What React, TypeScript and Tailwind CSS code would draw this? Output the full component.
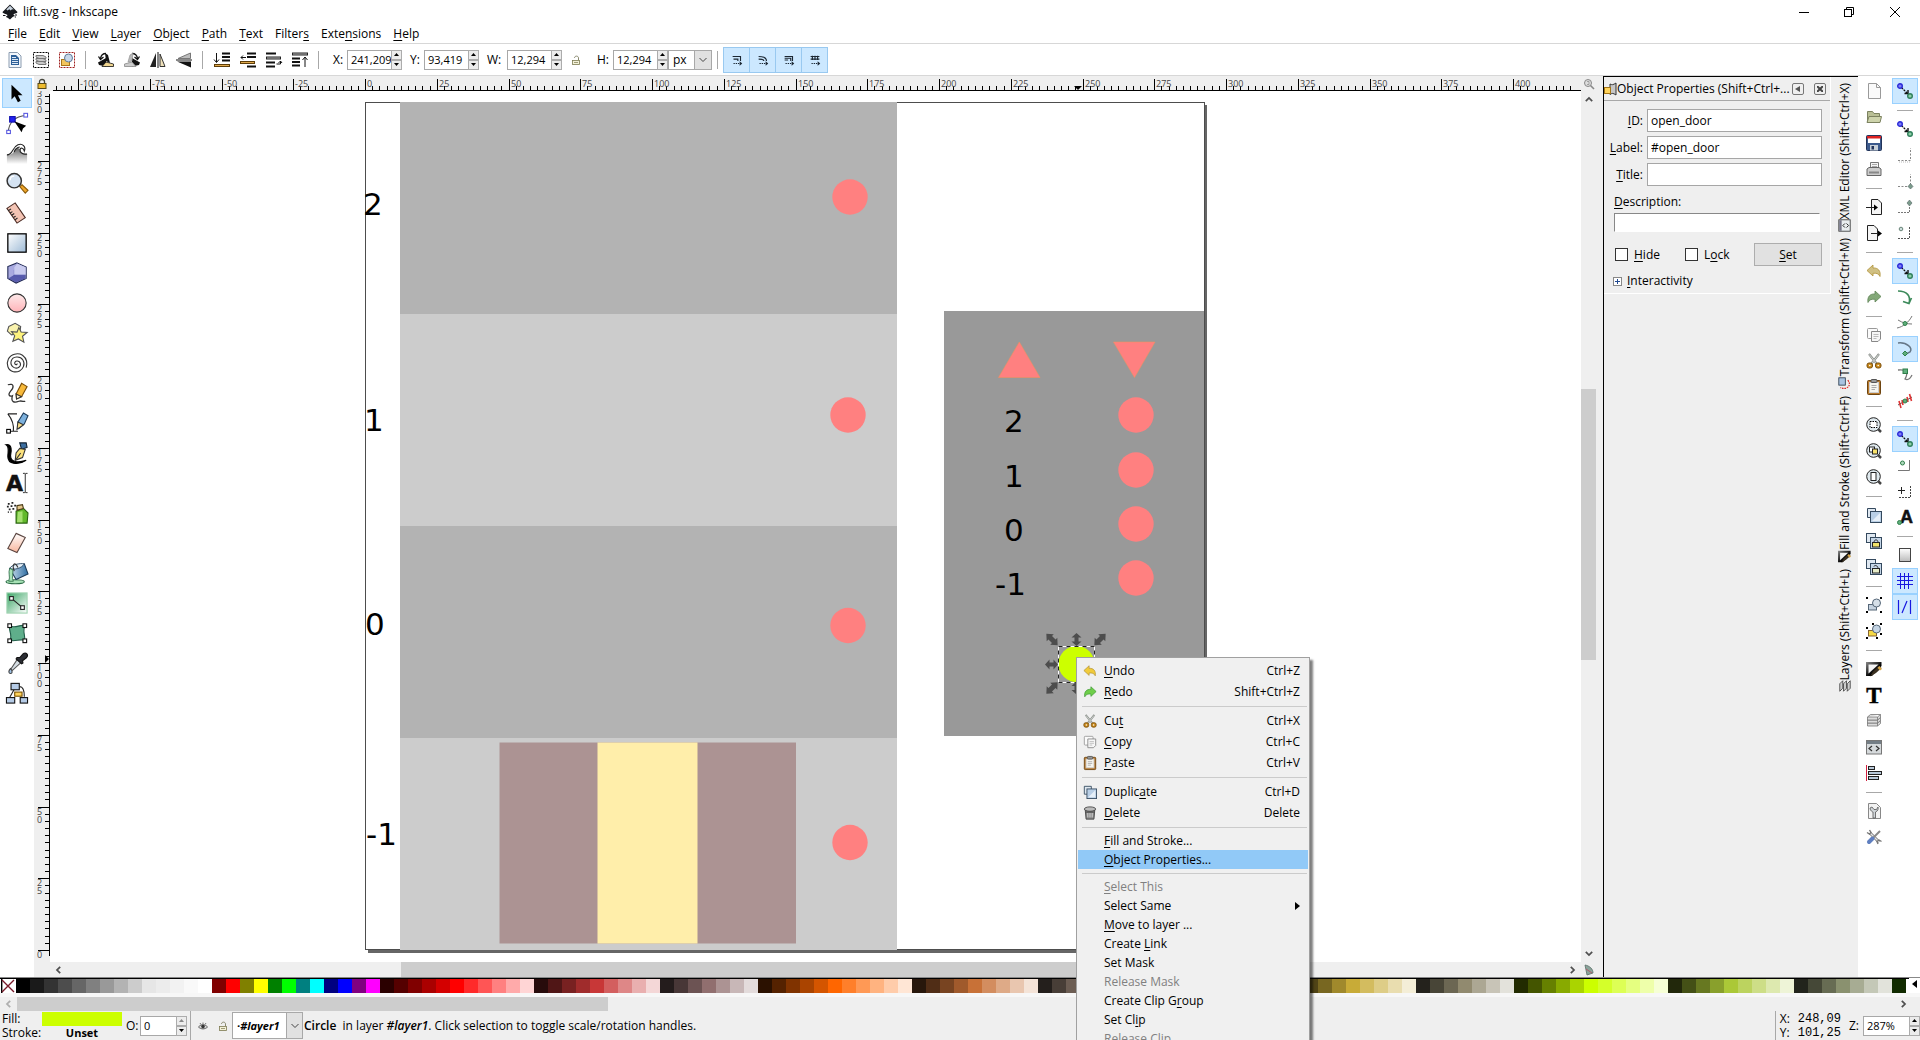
import React from "react";

type Kids = { children?: React.ReactNode };

/* ---------- helpers ---------- */

/** Renders a label in which the letter after "~" is the underlined mnemonic. */
function Mn({ t }: { t: string }) {
  const i = t.indexOf("~");
  if (i < 0) return <>{t}</>;
  return (
    <>
      {t.slice(0, i)}
      <span className="underline underline-offset-2">{t[i + 1]}</span>
      {t.slice(i + 2)}
    </>
  );
}

function I16({ children }: Kids) {
  return (
    <svg className="overflow-visible" width="16" height="16" viewBox="0 0 16 16" fill="none" stroke="#222" strokeWidth="1" aria-hidden="true">
      {children}
    </svg>
  );
}

function I24({ children }: Kids) {
  return (
    <svg className="overflow-visible" width="22" height="22" viewBox="0 0 24 24" fill="none" stroke="#222" strokeWidth="1.2" aria-hidden="true">
      {children}
    </svg>
  );
}

/* ---------- shared icons ---------- */

const undoPath = "M1 7.5 L7 2 V5 C12 4.500 15 8 14 13.500 C12.500 10.500 10.500 10 7 10.300 V13 Z";
const redoPath = "M15 7.5 L9 2 V5 C4 4.500 1 8 2 13.500 C3.500 10.500 5.500 10 9 10.300 V13 Z";

const UndoIcon = ({ fill }: { fill: string }) => (
  <I16><path d={undoPath} fill={fill} stroke="#b09238" strokeWidth=".8" /></I16>
);
const RedoIcon = ({ fill, line }: { fill: string; line: string }) => (
  <I16><path d={redoPath} fill={fill} stroke={line} strokeWidth=".8" /></I16>
);
const CutIcon = () => (
  <I16>
    <path d="M3 1 L10.500 10.500 M13 1 L5.500 10.500" stroke="#8a8f8a" strokeWidth="2.200" />
    <path d="M3.300 1.500 L10 10 M12.700 1.500 L6 10" stroke="#e4e6e4" strokeWidth=".8" />
    <rect x="1" y="10" width="5.500" height="5" rx="2" fill="#c98a1b" stroke="#7c4f0c" />
    <rect x="9.500" y="10" width="5.500" height="5" rx="2" fill="#c98a1b" stroke="#7c4f0c" />
    <circle cx="3.800" cy="12.500" r=".8" fill="#fff" stroke="none" />
    <circle cx="12.200" cy="12.500" r=".8" fill="#fff" stroke="none" />
  </I16>
);
const CopyIcon = () => (
  <I16>
    <rect x="1.500" y="1.500" width="10" height="10" rx="1" fill="#fbfbfb" stroke="#999" />
    <path d="M5.500 4.500 H14.500 V12 L12 14.500 H5.500 Z" fill="#f6f6f6" stroke="#888" />
    <path d="M7.500 7.500 H12.500 M7.500 9.500 H12.500 M7.500 11.500 H10.500" stroke="#bbb" />
  </I16>
);
const PasteIcon = () => (
  <I16>
    <rect x="1.500" y="1.500" width="13" height="14" rx="1" fill="#b7792c" stroke="#6d4410" />
    <rect x="3.500" y="3.500" width="9" height="10" fill="#f6f5ee" stroke="#ccc" />
    <rect x="5" y=".5" width="6" height="3" rx="1" fill="#999" stroke="#555" />
    <path d="M5.500 6.500 H10.500 M5.500 8.500 H10.500 M5.500 10.500 H9" stroke="#aaa" />
  </I16>
);
const DupIcon = () => (
  <I16>
    <path d="M1.500 1.500 H9.500 V10.500 H1.500 Z" fill="#dfe8f1" stroke="#34495e" />
    <rect x="4.500" y="4.500" width="11" height="11" fill="#b9cfe6" stroke="#34495e" />
    <path d="M6 14 L14 6 V14 Z" fill="#e6eff8" stroke="none" />
  </I16>
);
const TrashIcon = () => (
  <I16>
    <path d="M2.500 4 L3.500 15 H12.500 L13.500 4 Z" fill="#888" stroke="#444" />
    <ellipse cx="8" cy="3.500" rx="6.500" ry="2.500" fill="#bbb" stroke="#444" />
    <path d="M5.500 8 V13 M8 8 V13 M10.500 8 V13" stroke="#ddd" />
    <path d="M3 7 H13" stroke="#444" />
  </I16>
);
const Nodes = () => (
  <I16>
    <path d="M4.500 4.500 L11 11" stroke="#111" strokeWidth="1.400" strokeDasharray="2 1" />
    <path d="M7.500 10.500 H11 V7" fill="none" stroke="#111" strokeWidth="1.400" />
    <circle cx="3" cy="3" r="2.300" fill="#7f7ff5" stroke="#2a2ad8" strokeWidth="1.400" />
    <circle cx="13" cy="13" r="2.300" fill="#8fd0a8" stroke="#2f7f5a" strokeWidth="1.400" />
  </I16>
);
const DockFill = () => (
  <I16>
    <defs>
      <linearGradient id="fs" x2="1" y2="1"><stop stopColor="#8a8a8a" /><stop offset=".6" stopColor="#000" /></linearGradient>
    </defs>
    <path d="M0 1 H15.500 V5 L6 15 H0 Z" fill="url(#fs)" stroke="none" />
    <path d="M2.500 3.500 H12.500 L2.500 12.500 Z" fill="#f4f4f4" stroke="none" />
    <path d="M15.500 7 L10 12 L4 15.500 L7 10.500 L13 5 Z" fill="#3b3020" stroke="none" />
    <path d="M13.500 5 L16 8 L14 9.500 L11.500 6.800 Z" fill="#d7a648" stroke="none" />
  </I16>
);
const StackIcon = () => (
  <I16>
    {[10, 7, 4].map((y) => (
      <path key={y} d={`M1.500 ${y} L4.500 ${y - 2.5} H14.500 V${y + 0.5} L11.500 ${y + 3} H1.500 Z M1.500 ${y} H11.500 L14.500 ${y - 2.5} M11.500 ${y} V${y + 3}`} fill="#dcdcdc" stroke="#777" strokeWidth=".8" />
    ))}
  </I16>
);
const XmlIcon = () => (
  <I16>
    <rect x=".5" y="1.500" width="15" height="13.500" fill="#d5d9db" stroke="#777" />
    <rect x="1" y="2" width="14" height="3" fill="#737d85" stroke="none" />
    <path d="M6 7 L3 9.500 L6 12 M10 7 L13 9.500 L10 12" stroke="#333" strokeWidth="1.200" />
  </I16>
);
const LockIcon = () => (
  <svg width="12" height="12" viewBox="0 0 12 12" fill="none" aria-hidden="true">
    <path d="M3.500 6 V3.500 C3.500 .8 8.500 .8 8.500 3.500 V6" stroke="#44443a" strokeWidth="1.300" />
    <rect x="2" y="5.500" width="8" height="5" fill="#eebb2e" stroke="#5a4b18" />
  </svg>
);
const OpenLockIcon = () => (
  <svg width="12" height="12" viewBox="0 0 12 12" fill="none" aria-hidden="true">
    <path d="M4.500 4 C4.500 1.500 8.500 1.500 8.500 4 V6" stroke="#8a8a70" />
    <rect x="2.500" y="6.500" width="7" height="4" fill="#f3f1d8" stroke="#7d7a52" strokeWidth=".8" />
    <path d="M4 8.500 H8" stroke="#8a8660" strokeWidth=".8" />
  </svg>
);
const Chev = ({ d }: { d: string }) => (
  <svg width="8" height="8" viewBox="0 0 10 10" fill="none" stroke="#505050" strokeWidth="2.200" aria-hidden="true">
    <path d={d} />
  </svg>
);
const chevLeft = "M6.500 1 L2.500 5 L6.500 9";
const chevRight = "M3.500 1 L7.500 5 L3.500 9";
const chevUp = "M1 6.500 L5 2.500 L9 6.500";
const chevDown = "M1 3.500 L5 7.500 L9 3.500";

/* ---------- title and menu bars ---------- */

function TitleBar() {
  return (
    <header className="flex h-6 shrink-0 items-center bg-white pl-0.5">
      <svg width="16" height="16" viewBox="0 0 16 16" aria-hidden="true">
        <path d="M8 .5 L15.500 8 C15.500 9.500 11 9.500 11.500 10.500 C12 11.500 13 11 12.500 12.300 C11 12.500 10.500 13 8 15.500 C6.500 14.500 5.500 13.500 4 13 C3.500 12 6 12 5.500 11 C4.500 10 .5 9.500 .5 8 Z" fill="#16181c" />
        <path d="M8 1.800 L11.800 5.600 L10 5.200 L8.700 6.600 L7.300 5.200 L5.600 6.500 L4.300 5.500 Z" fill="#c9d4e0" />
        <path d="M1 11.500 H3.500 M13 11 H15 M12.800 13 H14" stroke="#16181c" />
      </svg>
      <h1 className="ml-[5px] flex-1 text-xs leading-4">lift.svg - Inkscape</h1>
      <div className="flex items-center pr-[19px]">
        <button aria-label="Minimize" className="mr-[33px]">
          <svg width="12" height="12" viewBox="0 0 12 12" stroke="#000"><path d="M1 6.500 H11" /></svg>
        </button>
        <button aria-label="Restore" className="mr-[34px]">
          <svg width="12" height="12" viewBox="0 0 12 12" stroke="#000" fill="none">
            <rect x="1.500" y="3.500" width="7" height="7" /><path d="M3.500 3.500 V1.500 H10.500 V8.500 H8.500" />
          </svg>
        </button>
        <button aria-label="Close">
          <svg width="12" height="12" viewBox="0 0 12 12" stroke="#000"><path d="M1 1 L11 11 M11 1 L1 11" /></svg>
        </button>
      </div>
    </header>
  );
}

const menus = ["~File", "~Edit", "~View", "~Layer", "~Object", "~Path", "~Text", "Filter~s", "Exte~nsions", "~Help"];

function MenuBar() {
  return (
    <nav className="flex h-5 shrink-0 items-center gap-3 border-b border-[#d7d7d7] bg-white pl-2">
      {menus.map((m) => (
        <button key={m} className="text-xs leading-4"><Mn t={m} /></button>
      ))}
    </nav>
  );
}

/* ---------- tool controls bar ---------- */

function Spin({ label, value, width, dim }: { label: string; value: string; width: string; dim?: boolean }) {
  return (
    <span className="flex">
      <input aria-label={label} defaultValue={value} className={`h-5 border border-r-0 border-[#a8a8a8] bg-white pl-[3px] text-[11px] leading-4 outline-none ${width}`} />
      <span className="flex h-5 w-[11px] flex-col">
        <button aria-label={`${label} up`} className="flex h-2.5 items-center justify-center border border-[#acacac] bg-[#ececec]">
          <svg width="5" height="3" viewBox="0 0 5 3" fill={dim ? "#888" : "#000"}><path d="M0 3 L2.500 0 L5 3 Z" /></svg>
        </button>
        <button aria-label={`${label} down`} className="flex h-2.5 items-center justify-center border border-[#acacac] bg-[#ececec]">
          <svg width="5" height="3" viewBox="0 0 5 3" fill="#000"><path d="M0 0 L2.500 3 L5 0 Z" /></svg>
        </button>
      </span>
    </span>
  );
}

const VSep = () => <span className="h-[18px] w-px shrink-0 bg-[#a8a8a8]" />;

const TB = ({ label, children }: { label: string } & Kids) => (
  <button aria-label={label} className="flex h-6 w-[26px] items-center justify-center">{children}</button>
);

function ControlsBar() {
  return (
    <div className="flex h-8 shrink-0 items-center border-b border-[#d7d7d7] bg-white pl-0.5">
      <TB label="Select all">
        <I16>
          <path d="M2 .5 H10.500 L14 4 V15.500 H2 Z" fill="#f3f7fc" stroke="#8b9cb0" />
          <path d="M4 3 H9 L12 6 V13 H4 Z" fill="#2e6098" stroke="none" />
          <path d="M5 5.500 H9 M5 7.500 H11 M5 9.500 H11 M5 11.500 H11" stroke="#dce8f5" />
        </I16>
      </TB>
      <TB label="Select all in all layers">
        <I16>
          <rect x=".5" y=".5" width="15" height="15" stroke="#000" strokeDasharray="2 1" />
          {[9.5, 6.5, 3.5].map((y) => (
            <path key={y} d={`M3 ${y} H10 L13 ${y + 1.5} V${y + 3} H6 L3 ${y + 1.5} Z`} fill="#c9c9c9" stroke="#777" />
          ))}
        </I16>
      </TB>
      <TB label="Deselect">
        <I16>
          <rect x=".5" y=".5" width="15" height="15" stroke="#a02020" strokeDasharray="2 1" />
          <rect x="2.500" y="7.500" width="8" height="6" fill="#f3c55c" stroke="#a8761a" />
          <circle cx="9.500" cy="6" r="4" fill="#c8d8ea" stroke="#5f7a99" />
        </I16>
      </TB>
      <span className="ml-[5px] mr-[7px] flex"><VSep /></span>
      <TB label="Rotate 90 counter-clockwise">
        <I16>
          <path d="M0 10.500 L8 6 V14.500 L1 13 Z" fill="#111" stroke="none" />
          <path d="M8 10 L15.500 12 V14.500 H4 Z" fill="#f0d58f" stroke="#111" strokeWidth=".8" />
          <path d="M2.500 6.500 C3 3 5 1.500 8 1.500 M.5 4.500 L2.500 7.500 L5.500 5" stroke="#111" strokeWidth="1.300" />
          <path d="M7 1 L10 3 L12 11 L8 9 Z" fill="#111" stroke="none" />
        </I16>
      </TB>
      <TB label="Rotate 90 clockwise">
        <I16>
          <path d="M16 10.500 L8 6 V14.500 L15 13 Z" fill="#111" stroke="none" />
          <path d="M8 10 L.5 12 V14.500 H12 Z" fill="#ccc" stroke="#888" strokeWidth=".8" />
          <path d="M13.500 6.500 C13 3 11 1.500 8 1.500 M15.500 4.500 L13.500 7.500 L10.500 5" stroke="#111" strokeWidth="1.300" />
          <path d="M9 1 L6 3 L4 10 L8 9 Z" fill="#bbb" stroke="#888" strokeWidth=".6" />
        </I16>
      </TB>
      <TB label="Flip horizontal">
        <I16>
          <path d="M6 1 V15 H0 Z" fill="#222" stroke="none" />
          <path d="M8 0 V16" stroke="#111" />
          <path d="M10 2 V14.500 H15 Z" fill="#efe1ba" stroke="#333" />
        </I16>
      </TB>
      <TB label="Flip vertical">
        <I16>
          <path d="M14.500 1 V6.500 H2 Z" fill="#bcbcbc" stroke="#777" />
          <path d="M0 8 H16" stroke="#111" />
          <path d="M15 9.500 V15.500 L1 9.500 Z" fill="#111" stroke="none" />
        </I16>
      </TB>
      <span className="ml-[5px] mr-[6px] flex"><VSep /></span>
      <TB label="Lower to bottom">
        <I16>
          <path d="M2.500 1 V10 M0 7.500 L2.500 10.500 L5 7.500" stroke="#111" />
          <path d="M8 1.500 H16 M8 5 H16 M8 8.500 H16" stroke="#111" strokeWidth="2" />
          <rect x=".5" y="12.500" width="15" height="2" fill="#e0a94d" stroke="#5d3d08" />
        </I16>
      </TB>
      <TB label="Lower">
        <I16>
          <path d="M7 1.500 H16 M7 5 H16 M7 14.500 H16" stroke="#111" strokeWidth="2" />
          <path d="M6 5.500 H1 M3 3.500 L1 5.500 L3 7.500" stroke="#111" />
          <rect x=".5" y="9.500" width="14" height="2" fill="#e0a94d" stroke="#5d3d08" />
        </I16>
      </TB>
      <TB label="Raise">
        <I16>
          <path d="M0 1.500 H10 M0 10.500 H9 M0 14.500 H9" stroke="#111" strokeWidth="2" />
          <rect x=".5" y="5" width="14" height="2" fill="#bbb" stroke="#222" />
          <path d="M10.500 12 H14.500 V9 M12.500 11 L14.500 9 L16 11" stroke="#111" />
        </I16>
      </TB>
      <TB label="Raise to top">
        <I16>
          <rect x=".5" y="1" width="15" height="2" fill="#bbb" stroke="#222" />
          <path d="M0 6.500 H8 M0 10 H8 M0 13.500 H8" stroke="#111" strokeWidth="2" />
          <path d="M13 15 V5 M10.500 8 L13 5 L15.500 8" stroke="#111" />
        </I16>
      </TB>
      <span className="ml-[5px] mr-[14px] flex"><VSep /></span>
      <span className="w-[14px] text-xs">X:</span>
      <Spin label="X" value="241,209" width="w-11" />
      <span className="ml-2 w-[14px] text-xs">Y:</span>
      <Spin label="Y" value="93,419" width="w-11" />
      <span className="ml-2 w-5 text-xs">W:</span>
      <Spin label="Width" value="12,294" width="w-11" />
      <button aria-label="Lock width and height" className="ml-2 mr-[15px]"><OpenLockIcon /></button>
      <span className="w-4 text-xs">H:</span>
      <Spin label="Height" value="12,294" width="w-11" />
      <span className="relative flex">
        <select aria-label="Unit" className="h-5 w-11 appearance-none border border-[#a8a8a8] bg-white pl-1 text-xs leading-4 outline-none">
          <option>px</option>
        </select>
        <span className="pointer-events-none absolute right-0 top-0 flex h-5 w-[18px] items-center justify-center border border-[#a8a8a8] bg-[#e1e1e1]">
          <svg width="8" height="6" viewBox="0 0 8 6" fill="none" stroke="#444"><path d="M.5 1 L4 4.500 L7.500 1" /></svg>
        </span>
      </span>
      <span className="mx-[5px] flex"><VSep /></span>
      <div className="flex border-l border-[#99c9f0]">
        {[
          "M3 4 H12 V9 M4 7 H9 V9",
          "M3 4 C8 4 12 5 12 9 M3 7 C6 7 9 7 9 9",
          "M3 4 H12 V9 M3 6 H10 V9 M3 8 H7",
          "M3 4 H13 M3 7 H13 M5 3 V8 M8 3 V8 M11 3 V8",
        ].map((d, i) => (
          <button key={d} aria-label={`Transform option ${i + 1}`} className="flex h-[26px] w-[26px] items-center justify-center border-y border-r border-[#99c9f0] bg-[#cce8ff]">
            <svg width="14" height="14" viewBox="0 0 16 16" fill="none" stroke="#1b2733" strokeWidth="1.300">
              <path d={d} /><path d="M4 12 H12" strokeDasharray="1.500 1" /><path d="M11 9.500 L14 12 L11 14.500 Z" fill="#1b2733" stroke="none" />
            </svg>
          </button>
        ))}
      </div>
    </div>
  );
}

/* ---------- toolbox ---------- */

const tools: { name: string; icon: React.ReactNode }[] = [
  { name: "Select", icon: <path d="M6 3 V19 L9.500 15.500 L13 22 L16 20.500 L13 14.500 H18 Z" fill="#000" stroke="none" /> },
  { name: "Node", icon: (<><path d="M2.500 22 C3 12 8 5 22 3.500" stroke="#555" /><rect x=".8" y="20" width="4" height="3.500" fill="#fff" stroke="#5a5ae0" /><rect x="19.500" y="1.500" width="4" height="4" fill="#fff" stroke="#5a5ae0" /><rect x="4" y="5" width="6" height="6" fill="#2222f0" stroke="#1010b0" /><path d="M9 10 L22 15 L18.500 18 L17 22 Z" fill="#000" stroke="none" /></>) },
  { name: "Tweak", icon: (<><defs><linearGradient id="tw" x2="0" y2="1"><stop stopColor="#666" /><stop offset="1" stopColor="#fff" /></linearGradient></defs><path d="M1 14 C8 14 6 6 13 3 C18 1 22 5 20 10 C19 6 16 6 15.500 8 C14.500 11 18 14 23 13 V24 H1 Z" fill="#fff" stroke="none" /><path d="M1 14 C7 14 8 12 9 9 C11 6 13 6 15.500 8 C14.500 11 18 14 23 13 V24 H1 Z" fill="url(#tw)" stroke="none" /><path d="M1 14 C8 14 6 6 13 3 C18 1 22 5 20 10 C19 6 16 6 15.500 8 C14.500 11 18 14 23 13 M9 11 C10 8 12 6 15 5.500" /></>) },
  { name: "Zoom", icon: (<><path d="M15 16 L17.500 14 L24 20 L21 23 Z" fill="#f0a62a" stroke="#8a5a08" /><circle cx="9" cy="9.500" r="7.800" fill="#d5e3f2" stroke="#333" strokeWidth="1.600" /><path d="M4.500 9 C4.500 6 6.500 4.500 9 4.500" stroke="#fff" strokeWidth="1.500" /></>) },
  { name: "Measure", icon: (<><path d="M1 7 L10 1 L21 17 L12 23 Z" fill="#f3c4b4" stroke="#4a2a22" /><path d="M2.500 9.500 L5.500 7.500 M4.500 12 L7 10.500 M6.200 14.500 L9 12.500 M8 17 L10.500 15.500 M9.800 19.500 L12.500 17.500" stroke="#222" /></>) },
  { name: "Rectangle", icon: (<><defs><linearGradient id="rc" x2="1" y2="1"><stop stopColor="#fff" /><stop offset="1" stopColor="#9dbad6" /></linearGradient></defs><rect x="2" y="2" width="20" height="20" fill="url(#rc)" stroke="#000" strokeWidth="1.400" /></>) },
  { name: "3D box", icon: (<><path d="M12 1 L22 5.500 V18 L11 23 L2 18 V5 Z" fill="#a9aae0" stroke="#222a55" /><path d="M12 1 L9 9 V15 L2 18 M9 9 V15 L22 18" fill="none" stroke="#7f82c4" strokeWidth=".6" /><path d="M12 1.500 L21.500 5.800 V14 H9 V6 Z" fill="#c9cbef" stroke="none" /><path d="M9 14 H21 V18 L11 22 L3 18 Z" fill="#4347a0" stroke="none" opacity=".8" /></>) },
  { name: "Ellipse", icon: (<><defs><linearGradient id="el" x2="0" y2="1"><stop stopColor="#fdeaea" /><stop offset="1" stopColor="#ffb3b8" /></linearGradient></defs><circle cx="12" cy="12" r="10" fill="url(#el)" stroke="#333" /></>) },
  { name: "Star", icon: (<><path d="M3 5 L10 1.500 L16 5 L15 12 L6 14 L1.500 10 Z" fill="#faf3ae" stroke="#555" /><path d="M14 6 L16.500 11 L23 11.500 L18 15.500 L19.500 22 L13.500 18.500 L7.500 21 L9.500 15 L6 10.500 L12 11 Z" fill="#fdf27c" stroke="#555" /></>) },
  { name: "Spiral", icon: <path d="M12 12.500 C12.500 14 10 14.500 9.500 12.500 C9 9.500 14 8.500 15.500 12 C17 16.500 11.500 19 8 16.500 C3.500 13.500 5 6 11.500 5.500 C18 5 21 11 19 16 C17.500 20 13 22.500 8 21.500 C2 20 0 13 2.500 8 C5 2 13 .5 18 3.500 C23 7 23.500 13 22 17" stroke="#333" /> },
  { name: "Pencil", icon: (<><path d="M2 3 C9 1 9 6 5 10 C1 15 5 16 7 15 C5 22 9 23 14 21 C18 20 19 22 21 21" stroke="#333" strokeWidth="1.400" /><path d="M11 13 L17 1.500 L23 5 L17 16 L11.500 18.500 Z" fill="#f7b93a" stroke="#7a4d08" /><path d="M11 13 L17 16 L11.500 18.500 Z" fill="#fff3d0" stroke="#333" /></>) },
  { name: "Pen", icon: (<><path d="M2 2 H12 M2 2 C6 7 9 13 8 21 H4 M8 21 H13" stroke="#222" /><rect x=".8" y="19" width="4" height="4" fill="#fff" stroke="#000" /><path d="M13 11 L19 1 L24 4 L20 13 L14 18 Z" fill="#7db1dd" stroke="#1d3c5a" /><path d="M13 11 L19 14 L12 19 Z" fill="#f8df8d" stroke="#333" /></>) },
  { name: "Calligraphy", icon: (<><path d="M0 3 C7 2 6 10 5 15 C5 22 13 23 22 20 C13 26 2 24 2 16 C2 11 4 5 0 3 Z" fill="#000" stroke="#000" /><path d="M15 1 H22 L23 6 L17 8 Z" fill="#3c6ea0" stroke="#123" /><path d="M15 7 L21 8 L18 17 L10 20 L11 12 Z" fill="#fbe17c" stroke="#333" /><path d="M11 19 L16 12" stroke="#333" /></>) },
  { name: "Text", icon: (<><text x="0" y="21" fontFamily="DejaVu Sans" fontWeight="bold" fontSize="24" fill="#111" stroke="#111" strokeWidth=".6">A</text><path d="M18.500 1.500 H20.500 L21 2 L21.500 1.500 H23.500 M21 2 V22 M18.500 22.500 H20.500 L21 22 L21.500 22.500 H23.500" stroke="#222" strokeWidth="1" /></>) },
  { name: "Spray", icon: (<><path d="M11 10 L19 7 L24 12 L23 23 H11 Z" fill="#62b92c" stroke="#2a6310" /><path d="M13 11 L18 10 V22 H12 Z" fill="#a5e070" stroke="none" /><path d="M12 4 L18 3 L19 7 L12 9 Z" fill="#e3c68b" stroke="#4d3d18" /><path d="M2 2 H4 M6 1 H8 M1 5 H3 M5 4.500 H7 M9 4 H11 M3 8 H5 M7 7.500 H9 M5 11 H6 M2 11 H3" stroke="#222" strokeWidth="1.800" /></>) },
  { name: "Eraser", icon: (<><defs><linearGradient id="er" x2="0" y2="1"><stop stopColor="#fff" /><stop offset="1" stopColor="#f8b59c" /></linearGradient></defs><path d="M11 1.500 L21 6 L12 22.500 L2 18 Z" fill="url(#er)" stroke="#5a4540" /></>) },
  { name: "Paint bucket", icon: (<><defs><linearGradient id="bk" x2="1"><stop stopColor="#cfe0ee" /><stop offset="1" stopColor="#2f6ea3" /></linearGradient></defs><ellipse cx="10" cy="21.500" rx="10" ry="2.200" fill="#a7e2b5" stroke="#2c6b46" /><path d="M4 7 L20 2 L24 13 L11 19 Z" fill="url(#bk)" stroke="#1c3a58" /><path d="M4 7 C9 9 17 7 20 2 C15 1 6 3 4 7 Z" fill="#e4eff8" stroke="#1c3a58" strokeWidth=".9" /><path d="M4 7 C2 12 5 16 3 21 H8 C6 17 8 13 7.500 8.500 Z" fill="#a7e2b5" stroke="#2c6b46" strokeWidth=".9" /><path d="M9 10 C6 2 10 -1 13 6" stroke="#333" /></>) },
  { name: "Gradient", icon: (<><defs><linearGradient id="gr" x2="1" y2="1"><stop stopColor="#3aa565" /><stop offset="1" stopColor="#fff" /></linearGradient></defs><rect x="1" y="1" width="22" height="22" fill="url(#gr)" stroke="#9fd3b1" /><path d="M6 7 L18 17" stroke="#222" /><rect x="4" y="5" width="4" height="4" fill="#fff" stroke="#222" /><rect x="16" y="15" width="4" height="4" fill="#fff" stroke="#222" /></>) },
  { name: "Mesh", icon: (<><path d="M4 4 C10 8 15 2 21 4 C17 10 22 15 20 20 C15 18 10 22 4 20 C8 14 2 9 4 4 Z" fill="#5fae8b" stroke="#225f4a" />{[[2, 2], [18.5, 2], [2, 18.5], [18.5, 18.5]].map(([x, y]) => (<rect key={`${x}-${y}`} x={x} y={y} width="4" height="4" fill="#fff" stroke="#111" />))}</>) },
  { name: "Dropper", icon: (<><path d="M13 7 L17 11 L7 20 L5 19 Z" fill="#d5dde3" stroke="#555" /><path d="M12 6 L15 6 L19 1.500 C22 0 25 3 22.500 6 L18 9.500 L18.500 12 L17 13 L11 7.500 Z" fill="#2b2d33" stroke="#111" /><path d="M5 18 C2 21 3 23.500 5 23.500 C7 23.500 7.500 21 5 18 Z" fill="#9ec1e4" stroke="#444" /></>) },
  { name: "Connector", icon: (<><path d="M9 8 L4 17 M15 5 C19 5 20 12 20 16" stroke="#222" /><rect x="5.500" y="1.500" width="9" height="7" fill="#b5cbe6" stroke="#111" /><rect x=".5" y="17" width="9" height="6" fill="#b5cbe6" stroke="#111" /><rect x="15.500" y="17" width="8" height="6" fill="#b5cbe6" stroke="#111" /><rect x="9.500" y="11" width="8" height="4.500" fill="#ffd35a" stroke="#7a5200" /></>) },
];

function Toolbox() {
  return (
    <aside className="flex w-[34px] shrink-0 flex-col items-center bg-white pt-0.5">
      {tools.map((t, i) => (
        <button
          key={t.name}
          aria-label={t.name}
          className={i === 0 ? "flex h-[30px] w-[30px] items-center justify-center border border-[#99d1ff] bg-[#cce8ff]" : "flex h-[30px] w-[30px] items-center justify-center"}
        >
          <I24>{t.icon}</I24>
        </button>
      ))}
    </aside>
  );
}

/* ---------- rulers ---------- */

const UNIT = 7.175;

function HRuler() {
  const zero = 315;
  const ticks = Array.from({ length: 212 }, (_, i) => i - 43);
  return (
    <svg className="h-[15px] min-w-0 flex-1 bg-[#efefef]" aria-hidden="true">
      <g shapeRendering="crispEdges" fill="#000">
        <rect x="3" y="14" width="100%" height="1" />
        {ticks.map((k) => (
          <rect key={k} x={Math.round(zero + k * UNIT)} y={k % 10 === 0 ? 3 : 10} width="1" height={k % 10 === 0 ? 11 : 4} />
        ))}
      </g>
      <g fill="#444" fontSize="9" fontFamily="'Open Sans'">
        {ticks.filter((k) => k % 10 === 0).map((k) => (
          <text key={k} x={Math.round(zero + k * UNIT) + 2} y="11">{k * 2.5}</text>
        ))}
      </g>
      <path d="M1024 10 H1032 L1028 14 Z" fill="#000" />
    </svg>
  );
}

function VRuler() {
  const zero = 859;
  const ticks = Array.from({ length: 120 }, (_, i) => i);
  return (
    <svg className="w-4 shrink-0 bg-[#efefef]" aria-hidden="true">
      <g shapeRendering="crispEdges" fill="#000">
        <rect x="15" y="3" width="1" height="862" />
        {ticks.map((k) => (
          <rect key={k} x={k % 10 === 0 ? 4 : 11} y={Math.round(zero - k * UNIT)} width={k % 10 === 0 ? 11 : 4} height="1" />
        ))}
      </g>
      <g fill="#444" fontSize="9" fontFamily="'Open Sans'">
        {ticks.filter((k) => k % 10 === 0).map((k) =>
          String(k * 2.5).split("").map((c, j) => (
            <text key={`${k}-${j}`} x="3" y={Math.round(zero - k * UNIT) + 8 + j * 8}>{c}</text>
          ))
        )}
        {["3", "0", "0"].map((c, j) => (
          <text key={j} x="3" y={6 + j * 8}>{c}</text>
        ))}
      </g>
      <path d="M11 564 L15 568 L11 572 Z" fill="#000" />
    </svg>
  );
}

/* ---------- canvas drawing ---------- */

function Handle({ x, y, r }: { x: number; y: number; r: number }) {
  return (
    <path
      transform={`translate(${x} ${y}) rotate(${r})`}
      d={r % 90 === 0 ? "M-6.500 0 L-2 -5 V-2 H2 V-5 L6.500 0 L2 5 V2 H-2 V5 Z" : "M-8 0 L-2.500 -5 V-2.500 H2.500 V-5 L8 0 L2.500 5 V2.500 H-2.500 V5 Z"}
      fill="#4d4d4d"
    />
  );
}

function Canvas() {
  return (
    <svg className="min-h-0 min-w-0 flex-1 bg-white" role="img" aria-label="lift.svg drawing">
      <g transform="translate(-50 -91)">
        <rect x="368" y="105" width="839" height="848" fill="#666" />
        <rect x="365.500" y="102.500" width="839" height="847" fill="#fff" stroke="#4d4d4d" />
        <rect x="400" y="102" width="497" height="212" fill="#b3b3b3" />
        <rect x="400" y="314" width="497" height="212" fill="#ccc" />
        <rect x="400" y="526" width="497" height="212" fill="#b3b3b3" />
        <rect x="400" y="738" width="497" height="212" fill="#ccc" />
        <rect x="499.500" y="742.500" width="296.500" height="201" fill="#ac9393" />
        <rect x="597.500" y="742.500" width="100" height="201" fill="#fea" />
        <rect x="944" y="311" width="260" height="425" fill="#999" />
        <g fill="#ff8080">
          {[[850, 197], [848, 415], [848, 625.5], [850, 842.5], [1136, 415], [1136, 470], [1136, 524], [1136, 578]].map(([x, y]) => (
            <circle key={`${x}-${y}`} cx={x} cy={y} r="17.700" />
          ))}
          <path d="M1019.300 342 L1040 377.500 H998.500 Z M1113.500 342 H1155 L1134.500 377.500 Z" stroke="#f0915f" strokeWidth=".6" />
        </g>
        <g fontFamily="'DejaVu Sans'" fontSize="31" fill="#000">
          <text x="363" y="215">2</text>
          <text x="364" y="431">1</text>
          <text x="365" y="635">0</text>
          <text x="366" y="845">-1</text>
          <text x="1004" y="432">2</text>
          <text x="1004" y="487">1</text>
          <text x="1004" y="541">0</text>
          <text x="995" y="595">-1</text>
        </g>
        <circle cx="1076.500" cy="664" r="18" fill="#cf0" />
        <rect x="1058.500" y="646.500" width="36" height="36" fill="none" stroke="#fff" />
        <rect x="1058.500" y="646.500" width="36" height="36" fill="none" stroke="#222" strokeDasharray="4 4" />
        <Handle x={1052} y={639.5} r={45} />
        <Handle x={1076.5} y={639.5} r={90} />
        <Handle x={1100} y={639.5} r={135} />
        <Handle x={1051.5} y={664.5} r={0} />
        <Handle x={1052} y={688} r={135} />
        <Handle x={1076.5} y={688} r={90} />
      </g>
    </svg>
  );
}

function Workspace() {
  return (
    <main className="flex min-w-0 flex-1 flex-col bg-[#efefef]">
      <div className="flex h-[15px] shrink-0">
        <button aria-label="Lock guides" className="flex w-4 items-center justify-center"><LockIcon /></button>
        <HRuler />
        <button aria-label="Zoom drawing" className="flex w-[22px] items-center pl-0.5">
          <svg width="12" height="12" viewBox="0 0 12 12" fill="none" stroke="#888">
            <circle cx="5" cy="5" r="3.500" fill="#ddd" /><path d="M7.500 7.500 L11 11" strokeWidth="1.600" /><path d="M4 3.500 H6 V6.500 H4" strokeWidth=".7" />
          </svg>
        </button>
      </div>
      <div className="flex min-h-0 flex-1">
        <VRuler />
        <Canvas />
        <div className="flex w-[22px] shrink-0 flex-col pr-[7px]">
          <button aria-label="Scroll up" className="flex h-[18px] items-center justify-center"><Chev d={chevUp} /></button>
          <div className="flex flex-1 flex-col">
            <div className="basis-[33.500%]" />
            <div className="basis-[32.500%] bg-[#cdcdcd]" />
          </div>
          <button aria-label="Scroll down" className="flex h-[18px] items-center justify-center"><Chev d={chevDown} /></button>
        </div>
      </div>
      <div className="flex h-[15px] shrink-0 items-stretch pl-4">
        <button aria-label="Scroll left" className="flex w-[18px] items-center justify-center"><Chev d={chevLeft} /></button>
        <div className="flex flex-1">
          <div className="basis-[22.300%]" />
          <div className="basis-[54%] bg-[#cdcdcd]" />
        </div>
        <button aria-label="Scroll right" className="flex w-[18px] items-center justify-center"><Chev d={chevRight} /></button>
        <button aria-label="Color management" className="flex w-[22px] items-center pl-0.5">
          <svg width="12" height="12" viewBox="0 0 12 12"><path d="M2 1 C7 2 10 5 10 9 L4 11 Z" fill="#8aa39a" stroke="#5b6f68" strokeWidth=".8" /><path d="M3 5 L9 9" stroke="#b05a6a" /></svg>
        </button>
      </div>
    </main>
  );
}

/* ---------- dock ---------- */

const field = "h-[23px] min-w-0 flex-1 border border-[#a6a6a6] bg-white px-[3px] text-xs leading-4 outline-none";

function DockTab({ label, children }: { label: string } & Kids) {
  return (
    <button className="flex flex-col items-center">
      <span className="rotate-180 text-xs leading-4 whitespace-nowrap [writing-mode:vertical-rl]">{label}</span>
      <span className="flex">{children}</span>
    </button>
  );
}

function Dock() {
  return (
    <section className="flex w-[255px] shrink-0 border-l border-t border-black bg-[#efefef]">
      <div className="flex min-w-0 flex-1 flex-col">
        <div className="border-r border-b border-white pb-1">
          <div className="flex h-6 items-center border-b border-[#a8a8a8] pr-1">
            <svg width="13" height="14" viewBox="0 0 13 14" aria-hidden="true">
              <path d="M6 2 C8 3 9 3 12 1 V13 C9 11 8 11 6 12.500 Z" fill="#c7c7c7" stroke="#333" /><rect x=".5" y="5.500" width="6" height="6" fill="#ffd35a" stroke="#a37414" />
            </svg>
            <h2 className="min-w-0 flex-1 text-xs leading-4 whitespace-nowrap">Object Properties (Shift+Ctrl+...</h2>
            <button aria-label="Iconify" className="mr-[10px] flex h-3 w-3 items-center justify-center rounded-xs border border-[#777]">
              <svg width="6" height="6" viewBox="0 0 6 6" fill="#555"><path d="M5 0 V6 L0 3 Z" /></svg>
            </button>
            <button aria-label="Close dialog" className="flex h-3 w-3 items-center justify-center rounded-xs border border-[#777]">
              <svg width="6" height="6" viewBox="0 0 6 6" stroke="#444" strokeWidth="2"><path d="M0 0 L6 6 M6 0 L0 6" /></svg>
            </button>
          </div>
          <div className="flex flex-col gap-1 pt-2 pr-2 pl-2">
            {[["id", "~ID:", "open_door"], ["lab", "~Label:", "#open_door"], ["tit", "~Title:", ""]].map(([id, l, v]) => (
              <div key={id} className="flex items-center gap-1">
                <label htmlFor={id} className="flex w-[31px] justify-end text-xs leading-4 whitespace-nowrap"><span><Mn t={l} /></span></label>
                <input id={id} defaultValue={v} className={field} />
              </div>
            ))}
          </div>
          <div className="flex flex-col gap-[3px] pt-2 pr-2.5 pl-2.5">
            <label htmlFor="desc" className="text-xs leading-4"><Mn t="~Description:" /></label>
            <textarea id="desc" rows={1} className="h-[19px] resize-none border border-white border-t-[#888] border-l-[#888] bg-white px-1 text-xs leading-4 outline-none" />
          </div>
          <div className="flex items-center pt-[11px] pr-2 pl-[11px]">
            <input id="hide" type="checkbox" className="h-[13px] w-[13px] appearance-none border border-[#333] bg-white" />
            <label htmlFor="hide" className="ml-1.5 w-[51px] text-xs leading-4"><Mn t="~Hide" /></label>
            <input id="lock" type="checkbox" className="h-[13px] w-[13px] appearance-none border border-[#333] bg-white" />
            <label htmlFor="lock" className="ml-1.5 flex-1 text-xs leading-4"><Mn t="L~ock" /></label>
            <button className="h-[23px] w-[68px] border border-[#adadad] bg-[#e1e1e1] text-xs leading-4"><Mn t="~Set" /></button>
          </div>
          <button className="flex items-center pt-[7px] pl-[9px]">
            <svg width="9" height="9" viewBox="0 0 9 9" fill="#fff" stroke="#888"><rect x=".5" y=".5" width="8" height="8" /><path d="M2 4.500 H7 M4.500 2 V7" stroke="#224a90" /></svg>
            <span className="ml-[5px] text-xs leading-4"><Mn t="~Interactivity" /></span>
          </button>
        </div>
      </div>
      <div className="flex w-[27px] shrink-0 flex-col items-center gap-1.5 pt-1.5">
        <DockTab label="XML Editor (Shift+Ctrl+X)"><svg width="13" height="13" viewBox="0 0 16 16" fill="none"><rect x="1" y="1" width="14" height="14" fill="#e9edef" stroke="#333" /><path d="M3 1.500 V14.500" stroke="#778" strokeWidth="3" /><path d="M8.500 5.500 L6 8 L8.500 10.500 M10.500 5.500 L13 8 L10.500 10.500" stroke="#222" strokeWidth="1.200" /></svg></DockTab>
        <DockTab label="Transform (Shift+Ctrl+M)"><svg width="13" height="13" viewBox="0 0 16 16" fill="none"><rect x="1" y="1" width="8" height="9" fill="#a9c3e2" stroke="#234" /><path d="M12 4 C17 9 12 17 3 13" stroke="#d22" strokeDasharray="2 1" strokeWidth="1.400" /></svg></DockTab>
        <DockTab label="Fill and Stroke (Shift+Ctrl+F)"><span className="flex [&>svg]:h-[13px] [&>svg]:w-[13px]"><DockFill /></span></DockTab>
        <DockTab label="Layers (Shift+Ctrl+L)"><svg width="12" height="12" viewBox="0 0 16 16"><path d="M1 5 L5 1 V11 L1 15 Z M6 5 L10 1 V11 L6 15 Z M11 5 L15 1 V11 L11 15 Z" fill="#ccc" stroke="#333" /></svg></DockTab>
      </div>
    </section>
  );
}

/* ---------- right tool bars ---------- */

type BarItem = { name: string; on?: boolean; icon: React.ReactNode } | null;

const page = "M2.500 .5 H10.500 L14.500 4.500 V15.500 H2.500 Z";
const lens = (inner: React.ReactNode) => (
  <I16>
    <path d="M11.500 11.500 L15 15" stroke="#444" strokeWidth="2.500" />
    <circle cx="7.500" cy="7.500" r="6.800" fill="#dfe9ee" stroke="#222" />
    {inner}
  </I16>
);
const clone = (open: boolean) => (
  <I16>
    <rect x=".5" y=".5" width="9" height="9" fill="#dfe8f1" stroke="#34495e" />
    <rect x="4.500" y="4.500" width="11" height="11" fill="#c5d6e8" stroke="#34495e" />
    <rect x="6.500" y="9.500" width="7" height="4.500" fill={open ? "#e6ecc8" : "#f0e26a"} stroke="#222" />
    <path d={open ? "M8 7.500 C8 6 12 6 12 9.500" : "M8 9.500 C8 6 12 6 12 9.500"} stroke="#222" />
  </I16>
);

const commands: BarItem[] = [
  { name: "New", icon: <I16><path d={page} fill="#fafafa" stroke="#9a9a9a" /><path d="M10.500 .5 V4.500 H14.500" stroke="#9a9a9a" /></I16> },
  { name: "Open", icon: <I16><path d="M1.500 13.500 V2.500 H6.500 L8 4.500 H13.500 V8" fill="#b9bf95" stroke="#7c8260" /><path d="M1 13.500 L3 7.500 H15.500 L14 13.500 Z" fill="#cdd3ab" stroke="#7c8260" /></I16> },
  { name: "Save", icon: <I16><rect x=".5" y=".5" width="15" height="15" rx="1" fill="#3c5a8c" stroke="#22345a" /><rect x="2" y="1" width="12" height="7" fill="#fff" stroke="none" /><rect x="1" y="1" width="14" height="2.500" fill="#d22" stroke="none" /><rect x="4" y="10" width="8" height="5.500" fill="#c9d1d8" stroke="none" /><rect x="5.500" y="11" width="2.500" height="3.500" fill="#22345a" stroke="none" /></I16> },
  { name: "Print", icon: <I16><path d="M4.500 8 V1.500 H12.500 V8" fill="#f4f4f4" stroke="#777" /><path d="M6 3.500 H11 M6 5.500 H11" stroke="#aaa" /><path d="M1 8 L3 6.500 H13 L15 8 V14.500 H1 Z" fill="#ccc" stroke="#666" /><rect x="3" y="10.500" width="10" height="2" fill="#888" stroke="none" /></I16> },
  null,
  { name: "Import", icon: <I16><path d="M5.500 .5 H12 L15.500 4 V15.500 H5.500 Z" fill="#f5f5f5" /><path d="M0 8.500 H10" /><path d="M8 5.500 L12 8.500 L8 11.500 Z" fill="#000" stroke="none" /></I16> },
  { name: "Export", icon: <I16><path d="M1.500 .5 H8 L11.500 4 V15.500 H1.500 Z" fill="#f5f5f5" /><path d="M5 8.500 H13" /><path d="M12 5.500 L16 8.500 L12 11.500 Z" fill="#000" stroke="none" /></I16> },
  null,
  { name: "Undo", icon: <UndoIcon fill="#d0c083" /> },
  { name: "Redo", icon: <RedoIcon fill="#83a878" line="#5f8457" /> },
  null,
  { name: "Copy", icon: <CopyIcon /> },
  { name: "Cut", icon: <CutIcon /> },
  { name: "Paste", icon: <PasteIcon /> },
  null,
  { name: "Zoom selection", icon: lens(<rect x="4" y="4.500" width="7" height="6" fill="#fff" stroke="#000" strokeDasharray="1.500 1" />) },
  { name: "Zoom drawing", icon: lens(<><rect x="3.500" y="4" width="5" height="5" fill="#fff" /><rect x="6.500" y="6" width="5" height="5" fill="#f8e26a" /></>) },
  { name: "Zoom page", icon: lens(<rect x="5" y="3.500" width="5" height="8" fill="#fff" />) },
  null,
  { name: "Duplicate", icon: <DupIcon /> },
  { name: "Clone", icon: clone(false) },
  { name: "Unlink clone", icon: clone(true) },
  null,
  { name: "Group", icon: <I16><path d="M0 1 H2 M14 1 H16 M0 15 H2 M14 15 H16" stroke="#000" strokeWidth="2" /><rect x="2.500" y="7.500" width="8" height="5.500" fill="#c5d2df" stroke="#567" /><circle cx="10.500" cy="6" r="4" fill="#d5dfe8" stroke="#567" /></I16> },
  { name: "Ungroup", icon: <I16><path d="M0 5 H2 M6 1 H8 M14 1 H16 M0 15 H2 M14 11 H16 M10 15 H12" stroke="#000" strokeWidth="2" /><rect x="2.500" y="7.500" width="8" height="5.500" fill="#f5d945" stroke="#863" /><circle cx="10.500" cy="6" r="4" fill="#c5d5e5" stroke="#567" /></I16> },
  null,
  { name: "Fill and stroke", icon: <DockFill /> },
  { name: "Text and font", icon: <I16><text x="8" y="15.500" textAnchor="middle" fontFamily="Liberation Serif" fontWeight="bold" fontSize="23" fill="#000" stroke="#000" strokeWidth=".5">T</text></I16> },
  { name: "Layers", icon: <StackIcon /> },
  { name: "XML editor", icon: <XmlIcon /> },
  { name: "Align and distribute", icon: <I16><path d="M.5 0 V16" stroke="#d02040" /><rect x="2.500" y="1.500" width="6" height="3" fill="#b9c9d9" /><rect x="2.500" y="6.500" width="13" height="3" fill="#b9c9d9" /><rect x="2.500" y="11.500" width="10" height="3" fill="#b9c9d9" /></I16> },
  null,
  { name: "Document properties", icon: <I16><path d={page} fill="#f2f2f2" stroke="#888" /><path d="M4 5 C4 8 7 9 7 9 V15 H9.500 V9 C12 8 12.500 6 12 4 L10.500 6.500 H8 L6 4 Z" fill="#cfd4d8" stroke="#555" strokeWidth=".8" /></I16> },
  { name: "Preferences", icon: <I16><path d="M4 4 L13 13" stroke="#777" strokeWidth="3" /><path d="M4 4 L13 13" stroke="#e4e4e4" strokeWidth="1.400" /><path d="M1 3.500 L3.500 5 L5 3.500 L3.500 1" stroke="#777" strokeWidth="1.400" /><path d="M12 15 L11 12.500 L13 11 L15.500 12.500" stroke="#777" strokeWidth="1.400" /><path d="M14 2 L7 9" stroke="#888" strokeWidth="2" /><path d="M6.500 9.500 L3 13" stroke="#5f7fc0" strokeWidth="4" strokeLinecap="round" /></I16> },
];

const snaps: BarItem[] = [
  { name: "Enable snapping", on: true, icon: <Nodes /> },
  null,
  { name: "Snap bounding boxes", icon: <Nodes /> },
  { name: "Snap to edges", icon: <I16><path d="M1 13.500 H13.500 V1" stroke="#888" strokeDasharray="2 1.500" /><path d="M2 15 H14" stroke="#bbb" strokeDasharray="1 1" /></I16> },
  { name: "Snap to corners", icon: <I16><path d="M1 13.500 H13.500 V1" stroke="#888" strokeDasharray="2 1.500" /><path d="M13.500 10.500 L16 13.500 L13.500 16 L11 13.500 Z" fill="#7b9b8b" stroke="#566" strokeWidth=".6" /></I16> },
  { name: "Snap edge midpoints", icon: <I16><path d="M1 13.500 H12.500 V7" stroke="#777" strokeDasharray="2 1" /><path d="M12.500 1 L15 4 L12.500 7 L10 4 Z" fill="#7b9b8b" stroke="#566" strokeWidth=".6" /></I16> },
  { name: "Snap centers", icon: <I16><path d="M1 13.500 H12.500 V1" stroke="#555" strokeDasharray="2 1" /><circle cx="4" cy="4" r="1.800" fill="#cdd" stroke="#6a8578" /></I16> },
  null,
  { name: "Snap nodes", on: true, icon: <Nodes /> },
  { name: "Snap to paths", icon: <I16><path d="M1 2 C10 2 14 7 12 14 M14.500 9 L12 14.500 L6 12.500" stroke="#3c8a5a" strokeWidth="1.600" /></I16> },
  { name: "Snap to intersections", icon: <I16><path d="M0 13 C6 12 12 7 15 1 M1 5 C6 8 10 9 15 9" stroke="#777" /><circle cx="8" cy="8.500" r="2" fill="#5fae7b" stroke="#2f7f4a" /></I16> },
  { name: "Snap cusp nodes", on: true, icon: <I16><path d="M1 2 C10 1 16 7 13 11 L9 13" stroke="#667788" strokeWidth="1.500" /><path d="M8 10 L10.500 12.500 L8 15 L5.500 12.500 Z" fill="#5fae7b" stroke="#2f7f4a" /></I16> },
  { name: "Snap smooth nodes", icon: <I16><path d="M1 3 C9 2 12 5 8 12 C12 14 14 10 15 8" stroke="#777" strokeWidth="1.300" /><rect x="6" y="2" width="4.500" height="4.500" fill="#5fae7b" stroke="#2f7f4a" /></I16> },
  { name: "Snap midpoints", icon: <I16><path d="M1 12 L15 4" stroke="#555" /><path d="M2 8 L4 15 M5 7 L6 12 M10 4 L11 9 M12.500 1 L14.500 8" stroke="#d33" strokeWidth="1.600" /><circle cx="8" cy="8" r="2" fill="#5fae7b" stroke="#2f7f4a" /></I16> },
  null,
  { name: "Snap other points", on: true, icon: <Nodes /> },
  { name: "Snap object centers", icon: <I16><path d="M1 13.500 H12.500 V3" stroke="#777" /><circle cx="5.500" cy="6" r="2" fill="#aed8bd" stroke="#2f7f4a" /></I16> },
  { name: "Snap rotation centers", icon: <I16><path d="M2 14.500 H13.500 V2" stroke="#444" strokeDasharray="2 1" /><path d="M1 7.500 H8 M4.500 4 V11" stroke="#222" /></I16> },
  { name: "Snap text baseline", icon: <I16><text x="3" y="14" fontFamily="Liberation Sans" fontWeight="bold" fontSize="18" fill="#111" stroke="#111" strokeWidth=".5">A</text><circle cx="2.500" cy="13.500" r="2" fill="#5fae7b" stroke="#2f7f4a" /></I16> },
  null,
  { name: "Snap page border", icon: <I16><defs><linearGradient id="pg" x2="0" y2="1"><stop stopColor="#fff" /><stop offset="1" stopColor="#bbb" /></linearGradient></defs><rect x="2.500" y="1.500" width="11" height="13" fill="url(#pg)" stroke="#444" /></I16> },
  { name: "Snap grids", on: true, icon: <I16><path d="M3.500 0 V16 M7.500 0 V16 M11.500 0 V16 M0 3.500 H16 M0 7.500 H16 M0 11.500 H16" stroke="#1818e0" /></I16> },
  { name: "Snap guides", on: true, icon: <I16><path d="M1.500 1 V15 M13.500 1 V15 M5 14 L10 2" stroke="#1818e0" strokeWidth="1.200" /></I16> },
];

function IconBar({ items, width }: { items: BarItem[]; width: string }) {
  return (
    <div className={`flex shrink-0 flex-col items-center bg-white pt-0.5 ${width}`}>
      {items.map((it, i) =>
        it === null ? (
          <span key={i} className="flex h-3 shrink-0 items-center"><span className="h-px w-4 bg-[#a8a8a8]" /></span>
        ) : (
          <button
            key={it.name}
            aria-label={it.name}
            className={it.on ? "flex h-[26px] w-[26px] shrink-0 items-center justify-center border border-[#99d1ff] bg-[#cce8ff]" : "flex h-[26px] w-[26px] shrink-0 items-center justify-center"}
          >
            {it.icon}
          </button>
        )
      )}
    </div>
  );
}

/* ---------- palette ---------- */

const palette = (
  "000000 1a1a1a 333333 4d4d4d 666666 808080 999999 b3b3b3 cccccc e6e6e6 ececec f2f2f2 f9f9f9 ffffff " +
  "800000 ff0000 808000 ffff00 008000 00ff00 008080 00ffff 000080 0000ff 800080 ff00ff " +
  "2b0000 550000 800000 aa0000 d40000 ff0000 ff2a2a ff5555 ff8080 ffaaaa ffd5d5 280b0b 501616 782121 a02c2c c83737 d35f5f de8787 e9afaf f4d7d7 241c1c 483737 6c5353 916f6f ac9393 c8b7b7 e3dbdb " +
  "2b1100 552200 803300 aa4400 d45500 ff6600 ff7f2a ff9955 ffb380 ffccaa ffe6d5 28170b 502d16 784421 a05a2c c87137 d38d5f deaa87 e9c6af f4e3d7 241f1c 483e37 6c5d53 917c6f ac9d93 c8beb7 e3dedb " +
  "2b2200 554400 806600 aa8800 d4aa00 ffcc00 ffd42a ffdd55 ffe680 ffeeaa fff6d5 28220b 504416 786721 a0892c c8ab37 d3bc5f decd87 e9ddaf f4eed7 24221c 484537 6c6753 918a6f aca793 c8c4b7 e3e2db " +
  "222b00 445500 668000 88aa00 aad400 ccff00 d4ff2a ddff55 e5ff80 eeffaa f6ffd5 22280b 445016 677821 89a02c abc837 bcd35f cdde87 dde9af eef4d7 22241c 454837 676c53 8a916f a7ac93 c4c8b7 e2e3db 112b00"
).split(" ");

function Palette() {
  return (
    <div className="shrink-0 bg-[#efefef]">
      <div className="flex h-4 border-t border-[#888] bg-white">
        <div className="flex min-w-0 flex-1 overflow-hidden border-t border-black">
          <button aria-label="None" className="flex w-4 shrink-0 items-center justify-center bg-white">
            <svg width="14" height="14" viewBox="0 0 14 14" stroke="#7a1a2a" strokeWidth="1.400" fill="none"><path d="M.7 0 V14" stroke="#000" /><path d="M1 1 L13 13 M13 1 L1 13" /></svg>
          </button>
          {palette.map((c, i) => (
            <button key={i} aria-label={`#${c}`} className="w-3.5 shrink-0" style={{ backgroundColor: `#${c}` }} />
          ))}
        </div>
        <button aria-label="Palette menu" className="flex w-[11px] items-start justify-center pt-0.5">
          <svg width="5" height="8" viewBox="0 0 5 8"><path d="M5 0 V8 L0 4 Z" fill="#000" /></svg>
        </button>
      </div>
      <div className="h-1 bg-[#f7f7f7]" />
      <div className="flex h-3.5">
        <button aria-label="Palette left" className="flex w-[17px] items-center justify-center opacity-40"><Chev d={chevLeft} /></button>
        <div className="flex flex-1"><div className="basis-[31.600%] bg-[#cdcdcd]" /></div>
        <button aria-label="Palette right" className="flex w-[34px] items-center justify-center"><Chev d={chevRight} /></button>
      </div>
    </div>
  );
}

/* ---------- status bar ---------- */

function StatusBar() {
  return (
    <footer className="flex h-[29px] shrink-0 items-center bg-[#efefef] text-xs leading-[14px]">
      <div className="flex w-[42px] flex-col pl-0.5"><span>Fill:</span><span>Stroke:</span></div>
      <div className="flex w-20 flex-col">
        <button aria-label="Fill color" className="h-3.5 bg-[#cf0]" />
        <button className="text-center text-[11px] leading-[14px] font-bold">Unset</button>
      </div>
      <span className="ml-1 w-[14px]">O:</span>
      <Spin label="Opacity" value="0" width="w-9" dim />
      <span className="ml-[3px] h-full w-px bg-[#a8a8a8]" />
      <button aria-label="Toggle layer visibility" className="ml-1.5">
        <svg width="12" height="12" viewBox="0 0 12 12" fill="none" stroke="#555"><path d="M1.500 7 C4 4 8 4 10.500 7 C8 9.500 4 9.500 1.500 7 Z" fill="#ddd" /><circle cx="6" cy="6.500" r="1.800" fill="#333" stroke="none" /><path d="M3 3 L4 4.500 M6 2.500 V4 M9 3 L8 4.500" strokeWidth=".8" /></svg>
      </button>
      <button aria-label="Toggle layer lock" className="ml-2"><OpenLockIcon /></button>
      <span className="relative ml-[3px] flex">
        <select aria-label="Layer" className="h-[27px] w-[71px] appearance-none border border-[#a8a8a8] bg-white pl-1 text-[11px] font-bold italic outline-none">
          <option>·#layer1</option>
        </select>
        <span className="pointer-events-none absolute top-0 right-0 flex h-[27px] w-[17px] items-center justify-center border border-[#a8a8a8] bg-[#e1e1e1]">
          <svg width="8" height="6" viewBox="0 0 8 6" fill="none" stroke="#444"><path d="M.5 1 L4 4.500 L7.500 1" /></svg>
        </span>
      </span>
      <p className="ml-px min-w-0 flex-1 whitespace-pre"><b className="font-semibold">Circle</b>  in layer <b className="font-semibold"><i>#layer1</i></b>. Click selection to toggle scale/rotation handles.</p>
      <span className="mr-1 h-full w-px bg-[#a8a8a8]" />
      <div className="grid grid-cols-[18px_auto] text-xs leading-[14px]">
        <span>X:</span><span className="font-['Liberation_Mono'] ">248,09</span>
        <span>Y:</span><span className="font-['Liberation_Mono'] ">101,25</span>
      </div>
      <span className="ml-2 mr-1">Z:</span>
      <Spin label="Zoom" value="287%" width="w-[46px]" />
    </footer>
  );
}

/* ---------- context menu ---------- */

type Entry = { t: string; key?: string; icon?: React.ReactNode; off?: boolean; on?: boolean; sub?: boolean } | null;

const entries: Entry[] = [
  { t: "~Undo", key: "Ctrl+Z", icon: <UndoIcon fill="#f1cb3a" /> },
  { t: "~Redo", key: "Shift+Ctrl+Z", icon: <RedoIcon fill="#6fce4a" line="#3d9a35" /> },
  null,
  { t: "Cu~t", key: "Ctrl+X", icon: <CutIcon /> },
  { t: "~Copy", key: "Ctrl+C", icon: <CopyIcon /> },
  { t: "~Paste", key: "Ctrl+V", icon: <PasteIcon /> },
  null,
  { t: "Duplic~ate", key: "Ctrl+D", icon: <DupIcon /> },
  { t: "~Delete", key: "Delete", icon: <TrashIcon /> },
  null,
  { t: "~Fill and Stroke..." },
  { t: "~Object Properties...", on: true },
  null,
  { t: "~Select This", off: true },
  { t: "Select Same", sub: true },
  { t: "~Move to layer ..." },
  { t: "Create ~Link" },
  { t: "Set Mask" },
  { t: "Release Mask", off: true },
  { t: "Create Clip G~roup" },
  { t: "Set Cl~ip" },
  { t: "Release C~lip", off: true },
];

function ContextMenu() {
  return (
    <div role="menu" className="absolute top-[657px] left-[1076px] w-[234px] border border-[#a0a0a0] bg-[#f0f0f0] px-px pt-0.5 shadow-[3px_3px_2px_rgba(0,0,0,0.5)]">
      {entries.map((e, i) => {
        if (!e) return <div key={i} className="flex h-2 items-center pr-px pl-1"><span className="h-px flex-1 bg-[#cbcbcb]" /></div>;
        return (
          <button
            key={i}
            role="menuitem"
            disabled={e.off}
            className={`flex w-full items-center pr-2 pl-[5px] text-left text-xs leading-4 ${e.icon ? "h-[21px]" : "h-[19px]"} ${e.on ? "bg-[#91c9f7]" : ""} ${e.off ? "text-[#808080]" : "text-black"}`}
          >
            <span className="flex w-[21px]">{e.icon && <span className="flex h-3.5 w-3.5 items-center justify-center [&>svg]:h-3.5 [&>svg]:w-3.5">{e.icon}</span>}</span>
            <span className="flex-1"><Mn t={e.t} /></span>
            {e.key && <span>{e.key}</span>}
            {e.sub && <svg width="5" height="8" viewBox="0 0 5 8"><path d="M0 0 V8 L5 4 Z" fill="#000" /></svg>}
          </button>
        );
      })}
    </div>
  );
}

/* ---------- page ---------- */

export default function App() {
  return (
    <div className="relative flex h-screen w-full flex-col overflow-hidden bg-white font-['Open_Sans','Noto_Sans',sans-serif] text-xs text-black">
      <TitleBar />
      <MenuBar />
      <ControlsBar />
      <div className="flex min-h-0 flex-1">
        <Toolbox />
        <Workspace />
        <Dock />
        <IconBar items={commands} width="w-[32px]" />
        <IconBar items={snaps} width="w-[30px]" />
      </div>
      <Palette />
      <StatusBar />
      <ContextMenu />
    </div>
  );
}
